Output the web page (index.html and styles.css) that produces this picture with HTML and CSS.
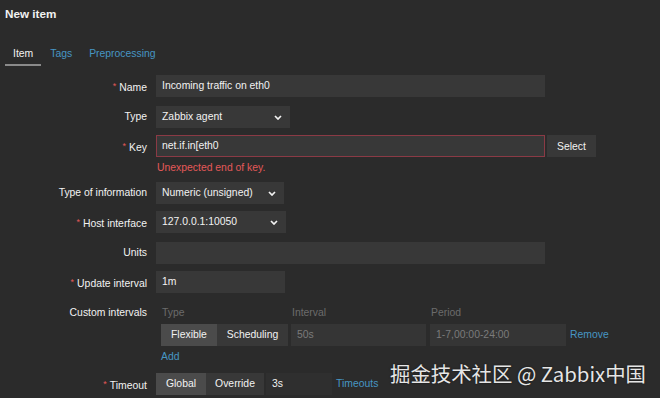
FILE: index.html
```html
<!DOCTYPE html>
<html lang="en">
<head>
<meta charset="utf-8">
<title>New item</title>
<link rel="stylesheet" href="styles.css">
</head>
<body>
<div class="page">
  <h1 class="page-title">New item</h1>
  <nav class="tabs">
    <span class="tab active">Item</span>
    <a class="tab" href="#">Tags</a>
    <a class="tab" href="#">Preprocessing</a>
  </nav>

  <form class="form-grid">
    <label class="lbl req">Name</label>
    <div class="field"><div class="input w-full">Incoming traffic on eth0</div></div>

    <label class="lbl">Type</label>
    <div class="field"><div class="select w-type"><span>Zabbix agent</span><svg class="chev" viewBox="0 0 8 5" width="8" height="5"><polyline points="1,1 4,4 7,1" fill="none" stroke="#f2f2f2" stroke-width="1.7"/></svg></div></div>

    <label class="lbl req">Key</label>
    <div class="field">
      <div class="row-inline">
        <div class="input w-full error">net.if.in[eth0</div>
        <button type="button" class="btn-alt">Select</button>
      </div>
      <div class="error-msg">Unexpected end of key.</div>
    </div>

    <label class="lbl">Type of information</label>
    <div class="field"><div class="select w-info"><span>Numeric (unsigned)</span><svg class="chev" viewBox="0 0 8 5" width="8" height="5"><polyline points="1,1 4,4 7,1" fill="none" stroke="#f2f2f2" stroke-width="1.7"/></svg></div></div>

    <label class="lbl req">Host interface</label>
    <div class="field"><div class="select w-host"><span>127.0.0.1:10050</span><svg class="chev" viewBox="0 0 8 5" width="8" height="5"><polyline points="1,1 4,4 7,1" fill="none" stroke="#f2f2f2" stroke-width="1.7"/></svg></div></div>

    <label class="lbl">Units</label>
    <div class="field"><div class="input w-full"></div></div>

    <label class="lbl req">Update interval</label>
    <div class="field"><div class="input w-upd">1m</div></div>

    <label class="lbl top">Custom intervals</label>
    <div class="field custom">
      <div class="ci-grid">
        <div class="ci-head">Type</div>
        <div class="ci-head">Interval</div>
        <div class="ci-head">Period</div>
        <div></div>
        <div class="toggle">
          <span class="tg active">Flexible</span><span class="tg">Scheduling</span>
        </div>
        <div class="input dim w-int">50s</div>
        <div class="input dim w-per">1-7,00:00-24:00</div>
        <a class="link" href="#">Remove</a>
      </div>
      <a class="link add" href="#">Add</a>
    </div>

    <label class="lbl req">Timeout</label>
    <div class="field">
      <div class="row-inline">
        <div class="toggle flush">
          <span class="tg active">Global</span><span class="tg">Override</span>
        </div>
        <div class="input ro w-to">3s</div>
        <a class="link to-link" href="#">Timeouts</a>
      </div>
    </div>
  </form>

  <div class="watermark">掘金技术社区 @ Zabbix中国</div>
</div>
</body>
</html>
```

FILE: styles.css
```css
* { box-sizing: border-box; }

html, body {
  margin: 0;
  padding: 0;
  background: #2b2b2b;
}

body {
  font-family: "Liberation Sans", Arial, sans-serif;
  font-size: 10.4px;
  color: #f2f2f2;
  width: 660px;
  height: 398px;
  overflow: hidden;
}

.page {
  position: relative;
  height: 398px;
}

.page-title {
  margin: 0;
  padding: 7px 0 0 5px;
  height: 28px;
  font-size: 11.7px;
  font-weight: bold;
  line-height: 14px;
  color: #f2f2f2;
}

.tabs {
  display: flex;
  gap: 1px;
  margin: 19px 0 0 5px;
}

.tab {
  display: block;
  padding: 0 8px 3px;
  line-height: 14px;
  font-size: 10.4px;
  color: #4796c4;
  text-decoration: none;
  border-bottom: 2px solid transparent;
}

.tab.active {
  color: #f2f2f2;
  border-bottom-color: #8a8a8a;
}

.form-grid {
  display: grid;
  grid-template-columns: 147px 1fr;
  column-gap: 9px;
  row-gap: 7px;
  margin-top: 9px;
}

.lbl {
  text-align: right;
  line-height: 22px;
  color: #f2f2f2;
  white-space: nowrap;
}

.lbl.req::before {
  content: "*";
  color: #e45959;
  font-size: 9px;
  vertical-align: 2px;
  margin-right: 3px;
}

.field {
  min-width: 0;
}

.row-inline {
  display: flex;
  align-items: center;
}

.input, .select {
  height: 22px;
  line-height: 20px;
  padding: 0 5px;
  background: #383838;
  border: 1px solid #383838;
  color: #f2f2f2;
  white-space: nowrap;
  overflow: hidden;
}

.select {
  display: flex;
  align-items: center;
  justify-content: space-between;
  padding-right: 7px;
}

.chev { flex: none; }

.w-full { width: 389px; }
.w-type { width: 134px; }
.w-info { width: 128px; }
.w-host { width: 130px; }
.w-upd  { width: 129px; }
.w-int  { width: 135px; }
.w-per  { width: 136px; }
.w-to   { width: 66px; }

.input.error {
  border-color: #8b3a45;
}

.btn-alt {
  height: 22px;
  margin-left: 2px;
  padding: 0 10px;
  background: #383838;
  border: none;
  color: #f2f2f2;
  font-family: inherit;
  font-size: 10.4px;
}

.error-msg {
  margin-top: 3px;
  line-height: 15px;
  color: #e45959;
  padding-left: 1px;
}

.custom {
  padding-left: 5px;
}

.lbl.top { align-self: start; }

.ci-grid {
  display: grid;
  grid-template-columns: 126px 135px 136px auto;
  column-gap: 4px;
  row-gap: 4px;
  margin-top: 4px;
  align-items: center;
}

.ci-grid > .toggle { margin-right: -1px; }

.ci-head {
  line-height: 14px;
  color: #6b6b6b;
  padding-left: 1px;
}

.input.dim {
  color: #7b7b7b;
  background: #353535;
  border-color: #353535;
}

.toggle {
  display: flex;
  height: 22px;
}

.tg {
  display: block;
  height: 22px;
  line-height: 22px;
  padding: 0 10px;
  background: #383838;
  color: #f2f2f2;
}

.tg.active {
  background: #4b4b4b;
}

.link {
  color: #4796c4;
  text-decoration: none;
  line-height: 22px;
}

.add {
  display: block;
  line-height: 14px;
  margin-top: 4px;
  padding-bottom: 2px;
}

.toggle.flush .tg:first-child { width: 50px; text-align: center; padding: 0; }
.toggle.flush .tg:last-child { width: 58px; text-align: center; padding: 0; }

.input.ro {
  margin-left: 2px;
  background: #2f2f2f;
  border-color: #2f2f2f;
}

.to-link { margin-left: 4px; }

.watermark {
  position: absolute;
  left: 390px;
  top: 360px;
  font-family: "Noto Sans CJK SC", "Noto Sans", sans-serif;
  font-size: 20.4px;
  line-height: 26px;
  color: #e6e6e6;
  text-shadow: 0 0 2px rgba(0,0,0,0.6);
  white-space: nowrap;
}
```
